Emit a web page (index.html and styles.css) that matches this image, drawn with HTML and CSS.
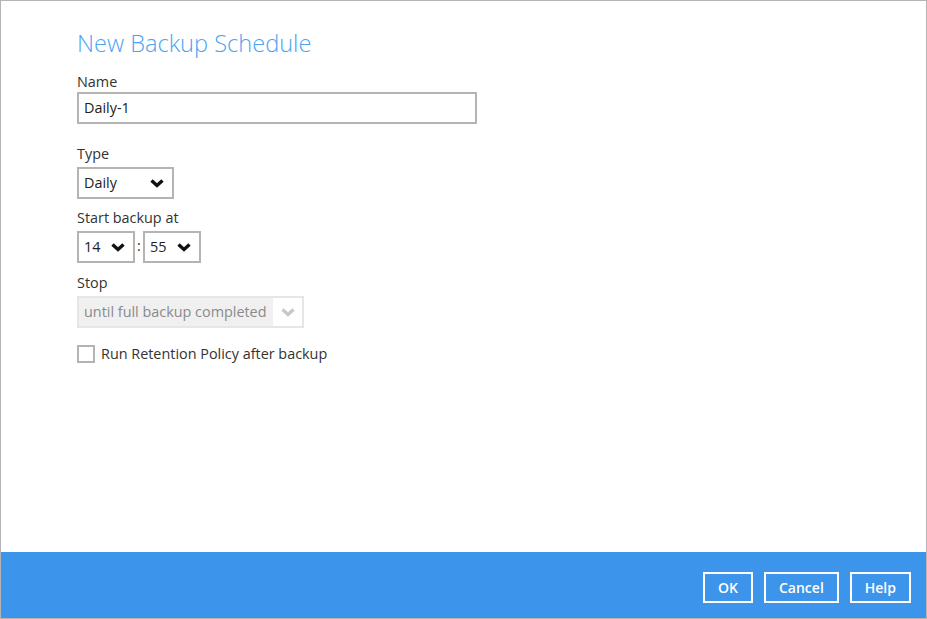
FILE: index.html
```html
<!DOCTYPE html>
<html lang="en">
<head>
  <meta charset="UTF-8">
  <title>New Backup Schedule</title>
  <link rel="stylesheet" href="styles.css">
</head>
<body>
  <div class="janela">
    <div class="conteudo">
      <h1>New Backup Schedule</h1>

      <label class="rotulo nome-rotulo">Name</label>
      <div class="campo nome">Daily-1</div>

      <label class="rotulo tipo">Type</label>
      <div class="campo select largo">
        <span>Daily</span>
        <svg class="seta" width="14" height="10" viewBox="0 0 14 10"><path d="M1.5 2.5 L7 7.5 L12.5 2.5" fill="none" stroke="#111" stroke-width="3.4"/></svg>
      </div>

      <label class="rotulo">Start backup at</label>
      <div class="hora">
        <div class="campo select curto">
          <span>14</span>
          <svg class="seta" width="14" height="10" viewBox="0 0 14 10"><path d="M1.5 2.5 L7 7.5 L12.5 2.5" fill="none" stroke="#111" stroke-width="3.4"/></svg>
        </div>
        <span class="dois-pontos">:</span>
        <div class="campo select curto">
          <span>55</span>
          <svg class="seta" width="14" height="10" viewBox="0 0 14 10"><path d="M1.5 2.5 L7 7.5 L12.5 2.5" fill="none" stroke="#111" stroke-width="3.4"/></svg>
        </div>
      </div>

      <label class="rotulo">Stop</label>
      <div class="campo select desativado">
        <span>until full backup completed</span>
        <div class="caixa-seta">
          <svg width="14" height="10" viewBox="0 0 14 10"><path d="M1.5 2.5 L7 7.5 L12.5 2.5" fill="none" stroke="#c8c8c8" stroke-width="3.4"/></svg>
        </div>
      </div>

      <div class="opcao">
        <span class="marcador"></span>
        <span>Run Retention Policy after backup</span>
      </div>
    </div>

    <footer>
      <button>OK</button>
      <button>Cancel</button>
      <button>Help</button>
    </footer>
  </div>
</body>
</html>
```

FILE: styles.css
```css
body {
  margin: 0;
  font-family: "Open Sans", sans-serif;
  color: #333;
  background: #fff;
}
.janela {
  width: 927px;
  height: 619px;
  box-sizing: border-box;
  border: 1px solid #b4b4b4;
  display: flex;
  flex-direction: column;
}
.conteudo {
  flex: 1;
  padding: 27px 0 0 76px;
}
h1 {
  margin: 0 0 14px 0;
  font-size: 23.6px;
  font-weight: 300;
  color: #4ca3f2;
  line-height: 30px;
}
.rotulo {
  display: block;
  font-size: 14.4px;
  line-height: 20px;
  margin-bottom: 3px;
}
.rotulo.nome-rotulo {
  margin-bottom: 0;
}
.rotulo.tipo {
  margin-top: 20px;
}
.campo {
  box-sizing: border-box;
  height: 32px;
  border: 2px solid #b4b4b4;
  font-size: 14.4px;
  line-height: 28px;
  padding: 0 5px;
  color: #222;
  margin-bottom: 10px;
}
.nome {
  width: 400px;
}
.select {
  display: flex;
  align-items: center;
  justify-content: space-between;
}
.largo {
  width: 97px;
  margin-bottom: 9px;
}
.seta {
  margin-right: 3px;
}
.hora {
  display: flex;
  align-items: flex-start;
}
.curto {
  width: 58px;
}
.dois-pontos {
  width: 8px;
  text-align: center;
  line-height: 30px;
  font-size: 14.4px;
}
.desativado {
  width: 227px;
  background: #f0f0f0;
  border-color: #e6e6e6;
  color: #8a8a8a;
  padding-right: 0;
  margin-bottom: 16px;
}
.caixa-seta {
  width: 29px;
  height: 28px;
  background: #fff;
  display: flex;
  align-items: center;
  justify-content: center;
}
.opcao {
  display: flex;
  align-items: center;
  gap: 6px;
  font-size: 14.4px;
}
.marcador {
  width: 18px;
  height: 18px;
  box-sizing: border-box;
  border: 2px solid #b4b4b4;
}
footer {
  height: 66px;
  box-sizing: border-box;
  background: #3c95eb;
  padding: 20px 15px 0 0;
  display: flex;
  justify-content: flex-end;
  gap: 11px;
}
footer button {
  height: 31px;
  padding: 0 13px;
  background: none;
  border: 2px solid #fff;
  color: #fff;
  font-family: "Open Sans", sans-serif;
  font-size: 14px;
  font-weight: 600;
  line-height: 25px;
}
```
